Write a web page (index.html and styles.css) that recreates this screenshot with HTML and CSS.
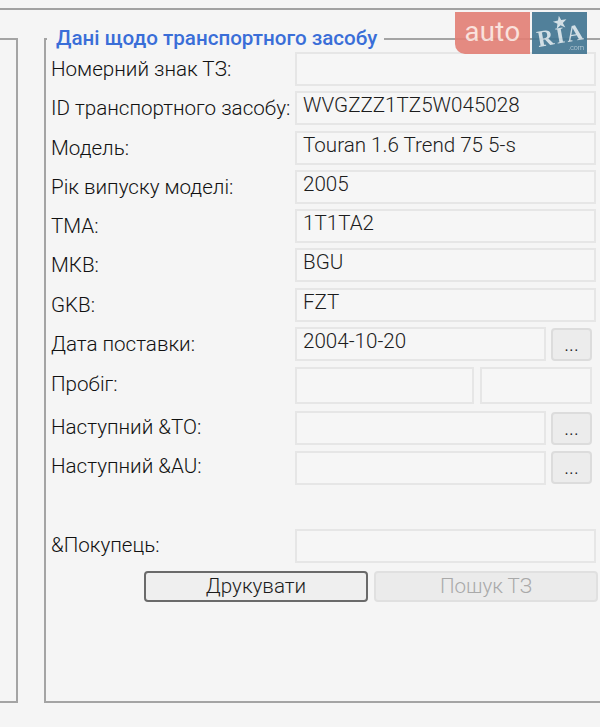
FILE: index.html
```html
<!DOCTYPE html>
<html lang="uk">
<head>
<meta charset="utf-8">
<title>Дані щодо транспортного засобу</title>
<link rel="stylesheet" href="styles.css">
</head>
<body>
<div class="screen">
  <div class="panels">
    <div class="side"></div>
    <fieldset class="vehicle">
      <legend>Дані щодо транспортного засобу</legend>
      <div class="row"><span class="label">Номерний знак ТЗ:</span><span class="field"></span></div>
      <div class="row"><span class="label">ID транспортного засобу:</span><span class="field">WVGZZZ1TZ5W045028</span></div>
      <div class="row"><span class="label">Модель:</span><span class="field">Touran 1.6 Trend 75 5-s</span></div>
      <div class="row"><span class="label">Рік випуску моделі:</span><span class="field">2005</span></div>
      <div class="row"><span class="label">ТМА:</span><span class="field">1T1TA2</span></div>
      <div class="row"><span class="label">МКВ:</span><span class="field">BGU</span></div>
      <div class="row"><span class="label">GKB:</span><span class="field">FZT</span></div>
      <div class="row row-more row-date"><span class="label">Дата поставки:</span><span class="field">2004-10-20</span><span class="more">...</span></div>
      <div class="row row-tall row-lift"><span class="label">Пробіг:</span><span class="field field-km"></span><span class="field field-unit"></span></div>
      <div class="row row-more row-lift"><span class="label">Наступний &amp;ТО:</span><span class="field"></span><span class="more">...</span></div>
      <div class="row row-more row-lift"><span class="label">Наступний &amp;AU:</span><span class="field"></span><span class="more">...</span></div>
      <div class="row row-buyer"><span class="label">&amp;Покупець:</span><span class="field"></span></div>
      <div class="actions"><span class="btn btn-focus">Друкувати</span><span class="btn btn-off">Пошук ТЗ</span></div>
    </fieldset>
  </div>
  <div class="logo">
    <span class="logo-auto">auto</span>
    <span class="logo-ria">
      <svg class="logo-star" viewBox="0 0 24 24"><path d="M12 1l2.6 7.400 8.400.4-6.600 4.600 2.600 8-7-5-7 5 2.600-8L1 8.800l8.400-.4z"/></svg>
      <span class="logo-ria-text">RIA</span>
      <span class="logo-com">.com</span>
    </span>
  </div>
</div>
</body>
</html>
```

FILE: styles.css
```css
* { box-sizing: border-box; }
html, body { margin: 0; height: 100%; }
body {
  background: #f5f5f5;
  color: #1c1c1c;
  font-family: Roboto, "Noto Sans", sans-serif;
  font-size: 20.6px;
  font-weight: 300;
  overflow: hidden;
}
.screen {
  position: relative;
  width: 600px;
  height: 727px;
  padding-top: 8px;
}
.panels {
  display: flex;
  height: 695px;
  border-top: 2px solid #a2a2a2;
  padding-top: 16px;
}
.side {
  flex: none;
  width: 18px;
  height: 665px;
  margin-top: 12px;
  border: 2px solid #a4a4a4;
  border-left: 0;
}
.vehicle {
  flex: none;
  width: 557px;
  height: 677px;
  margin: 0 0 0 26px;
  padding: 1px 5px 0 5px;
  min-width: 0;
  border: 2px solid #a4a4a4;
  border-right: 0;
}
.vehicle legend {
  margin-left: -4px;
  padding: 0 7px 0 9px;
  color: #3a6ed8;
  font-size: 20.6px;
  font-weight: 500;
  line-height: 25px;
}
.row {
  display: flex;
  align-items: center;
  gap: 5px;
  height: 34px;
  margin-bottom: 5.3px;
}
.row-date { margin-bottom: 6.3px; }
.row-more .more { margin-right: 4px; }
.row-tall { height: 37px; margin-bottom: 7px; }
.row-buyer { margin-top: 44px; margin-bottom: 8px; }
.row-lift .label { padding-bottom: 3px; }
.row-buyer .label { padding-bottom: 2px; }
.label {
  flex: none;
  width: 239px;
  white-space: nowrap;
  font-size: 20.6px;
  font-weight: 300;
  color: #111;
}
.field {
  flex: 1;
  align-self: stretch;
  min-width: 0;
  padding: 0 6px 5px;
  border: 2px solid #e6e6e6;
  background: #f6f6f6;
  line-height: 25px;
  white-space: nowrap;
}
.field-km { flex: none; width: 179px; margin-right: 1px; }
.field-unit { flex: none; width: 112px; }
.more {
  flex: none;
  width: 41px;
  height: 33px;
  border: 2px solid #dcdcdc;
  border-radius: 4px;
  background: #ececec;
  font-size: 20px;
  line-height: 29px;
  text-align: center;
}
.actions {
  display: flex;
  gap: 6px;
  padding-left: 93px;
}
.btn {
  flex: none;
  width: 224px;
  height: 31px;
  border-radius: 4px;
  background: #efefef;
  line-height: 27px;
  text-align: center;
}
.btn-focus { border: 2px solid #6a6a6a; }
.btn-off {
  border: 2px solid #e0e0e0;
  background: #ebebeb;
  color: #a9a9a9;
}
.logo {
  position: absolute;
  top: 12px;
  left: 455px;
  display: flex;
  gap: 2px;
  height: 42px;
  opacity: .9;
}
.logo-auto {
  width: 75px;
  border-radius: 0 0 0 10px;
  background: #e37e74;
  color: #fbe0db;
  font-size: 27.5px;
  font-weight: 400;
  line-height: 39px;
  text-align: center;
  letter-spacing: .4px;
}
.logo-ria {
  position: relative;
  width: 55px;
  background: #3f7390;
  color: #cfdde4;
}
.logo-star {
  position: absolute;
  top: 3px;
  left: 17px;
  width: 22px;
  height: 15px;
  fill: #cfdde4;
  transform: rotate(-10deg);
}
.logo-ria-text {
  position: absolute;
  top: 12px;
  left: 5px;
  font-family: "Liberation Serif", serif;
  font-size: 23px;
  font-weight: 700;
  letter-spacing: 2px;
  line-height: 24px;
  transform: rotate(-10deg);
}
.logo-com {
  position: absolute;
  right: 3px;
  bottom: 2px;
  font-size: 7px;
  line-height: 8px;
}
```
